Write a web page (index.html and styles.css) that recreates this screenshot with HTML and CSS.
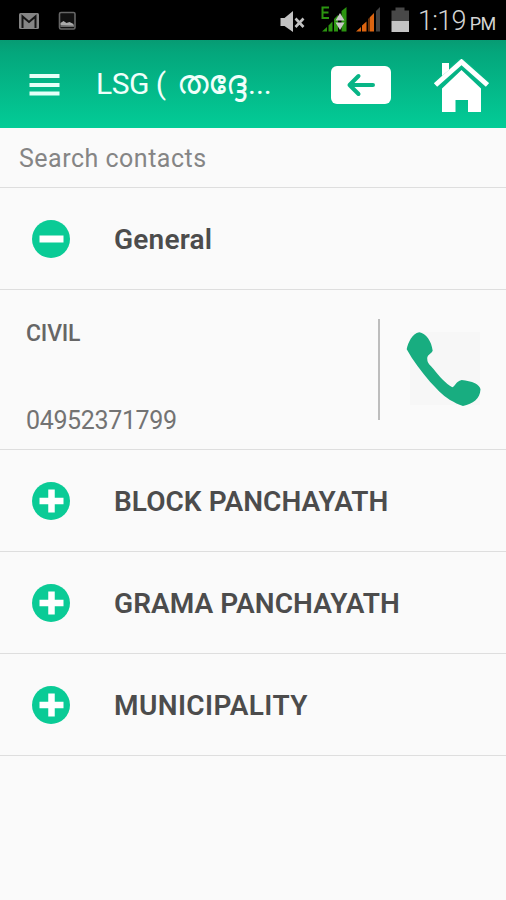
FILE: index.html
```html
<!DOCTYPE html>
<html lang="en">
<head>
<meta charset="utf-8">
<title>LSG contacts</title>
<link rel="stylesheet" href="styles.css">
</head>
<body>
<div class="status">
  <svg class="notices" width="80" height="40" viewBox="0 0 80 40">
    <rect x="19" y="13" width="20" height="16" rx="1.5" fill="#858585"/>
    <path d="M22.500 28V16.500L29 22l6.500-5.500V28" fill="none" stroke="#151515" stroke-width="2"/>
    <rect x="59.500" y="12.500" width="15.500" height="16.500" rx="1.500" fill="#111" stroke="#666" stroke-width="1.600"/>
    <path d="M60.500 25v-2l3-2 3 2 3-1 4 2v2z" fill="#aaa"/>
    <path d="M60.500 26h13.500" stroke="#888" stroke-width="1.500"/>
  </svg>
  <svg class="signals" width="136" height="40" viewBox="276 0 136 40">
    <path d="M280.500 18h4L293 11v21l-8.500-6h-4z" fill="#c2c2c2"/>
    <path d="M295.500 18.500l8 8.500m0-8.500l-8 8.500" stroke="#c2c2c2" stroke-width="2.600"/>
    <path d="M329 7.500h-6.500v10.500h6.500m-6.500-5.500h6" fill="none" stroke="#2b9410" stroke-width="2"/>
    <path d="M322 31.500l5-4.500v4.500zM328.500 31.500v-6l4-4v10zM334 31.500V19l4-4v16.500zM341.500 31.500V11l5-4v24.500z" fill="#2b9410"/>
    <path d="M335.500 20.500l4.500-7.500 4.500 7.500zM335.500 22.500h9l-4.500 7.500z" fill="#c8c8c8"/>
    <path d="M356 31.500l5-4.500v4.500zM362 31.500v-6l4.500-4v10zM368 31.500V19l6-6v18.500z" fill="#db6410"/>
    <path d="M369 15v17" stroke="#000"/>
    <path d="M376 31.500V11l4-4v24.500z" fill="#424242"/>
    <path d="M391.500 10.500h4V7.500h9v3h4.500V21h-17.500z" fill="#484848"/>
    <path d="M391.500 21H409v11h-17.500z" fill="#c4c4c4"/>
  </svg>
  <div class="clock">1:19<span class="meridiem">PM</span></div>
</div>
<header class="bar">
  <svg class="menu" width="32" height="24" viewBox="0 0 32 24"><path d="M.5 3h30M.5 12h30M.5 20.500h30" stroke="#e6fff8" stroke-width="4"/></svg>
  <h1 class="title"><span class="latin">LSG (</span><span class="local">തദ്ദേ</span><span class="dots">...</span></h1>
  <svg class="back" width="60" height="38" viewBox="0 0 60 38"><rect width="60" height="38" rx="6" fill="#fff"/><path d="M42 19H18.500M27.500 10l-9 9 9 9" fill="none" stroke="#08b586" stroke-width="4" stroke-linecap="round" stroke-linejoin="round"/></svg>
  <svg class="home" width="56" height="54" viewBox="0 0 56 54"><path d="M9 29.500L28.500 11 48 29.500V53H35V41H22.500v12H9z" fill="#fff"/><path d="M2.500 26L28.500 3l26 23" fill="none" stroke="#08b586" stroke-width="8"/><path d="M9 4h7v7l-7 6z" fill="#fff"/><path d="M2.500 26L28.500 3l26 23" fill="none" stroke="#fff" stroke-width="5"/></svg>
</header>
<main>
  <div class="search">Search contacts</div>
  <section class="group"><svg class="toggle" width="38" height="38" viewBox="0 0 38 38"><circle cx="19" cy="19" r="19" fill="#0acb96"/><path d="M7.500 19h24" stroke="#fff" stroke-width="7"/></svg><h2 class="general">General</h2></section>
  <article class="contact">
    <div class="details"><h3>CIVIL</h3><p>04952371799</p></div>
    <div class="call"><svg width="76" height="76" viewBox="0 0 76 76"><path d="M4 1h70v73H4z" fill="#f7f7f7"/><path d="M.7 18.300C2 12 6 2.500 13.300 1.300 20 2.500 25.500 10 26.700 19.700 25 23 20.500 24 21.300 28.300c0 4 3 6 6 9.500C33 45 40 53 46.300 56.300c3-1 3-5.500 9.400-7.300 5 .5 9.500 1.500 13.300 3.300 3 1.500 5 3.500 5.500 6C74 68 67 73 57 75c-5-1.500-8-3.500-13-6-8-5-14-12-20-18.300C15 40 7 30 .7 18.300z" fill="#18ad80"/></svg></div>
  </article>
  <section class="group"><svg class="toggle" width="38" height="38" viewBox="0 0 38 38"><circle cx="19" cy="19" r="19" fill="#0acb96"/><path d="M7.500 19h24M19.500 7.500v23" stroke="#fff" stroke-width="6.500"/></svg><h2 class="block">BLOCK PANCHAYATH</h2></section>
  <section class="group"><svg class="toggle" width="38" height="38" viewBox="0 0 38 38"><circle cx="19" cy="19" r="19" fill="#0acb96"/><path d="M7.500 19h24M19.500 7.500v23" stroke="#fff" stroke-width="6.500"/></svg><h2 class="grama">GRAMA PANCHAYATH</h2></section>
  <section class="group"><svg class="toggle" width="38" height="38" viewBox="0 0 38 38"><circle cx="19" cy="19" r="19" fill="#0acb96"/><path d="M7.500 19h24M19.500 7.500v23" stroke="#fff" stroke-width="6.500"/></svg><h2 class="municipality">MUNICIPALITY</h2></section>
</main>
</body>
</html>
```
FILE: styles.css
```css
* { box-sizing: border-box; }
body { margin: 0; width: 506px; height: 900px; overflow: hidden; background: #fafafa; font-family: Roboto, "Noto Sans", sans-serif; }
svg { display: block; flex: none; }
h1, h2, h3, p { margin: 0; white-space: nowrap; }
.status { height: 40px; background: #000; display: flex; }
.signals { margin-left: 196px; }
.clock { margin-left: 6px; line-height: 43px; font-size: 27px; font-weight: 300; letter-spacing: -.7px; color: #d4d4d4; white-space: nowrap; }
.meridiem { font-size: 18px; font-weight: 400; margin-left: 4px; }
.bar { height: 88px; display: flex; align-items: center; background: linear-gradient(#079b73, #04a77c 15%, #03cc97); }
.menu { margin: 1px 0 0 29px; }
.title { width: 176px; margin-left: 35px; display: flex; align-items: center; color: #f0fffb; font-size: 30px; font-weight: 400; line-height: 40px; }
.latin { width: 81px; letter-spacing: -.5px; }
.local { width: 71px; font-size: 33px; transform: translateY(-1px); }
.dots { letter-spacing: 0; }
.back { margin-left: 59px; margin-top: 1px; }
.home { margin-left: 42px; margin-top: 4px; }
.search { height: 60px; padding-left: 19px; border-bottom: 1px solid #dedede; line-height: 62px; font-size: 25px; color: #858585; letter-spacing: .5px; }
.group { height: 102px; display: flex; align-items: center; border-bottom: 1px solid #dedede; }
.toggle { margin-left: 32px; }
.group h2 { margin-left: 44px; padding-top: 1px; font-size: 28px; font-weight: 600; letter-spacing: .05px; color: #4c4c4c; }
.group .general { letter-spacing: .2px; }
.group .municipality { letter-spacing: .4px; }
.contact { height: 160px; display: flex; align-items: center; border-bottom: 1px solid #dedede; color: #666; }
.details { width: 378px; height: 101px; padding-left: 26px; display: flex; flex-direction: column; justify-content: space-between; }
.details h3 { font-size: 23px; line-height: 30px; font-weight: 500; letter-spacing: -.2px; }
.details p { font-size: 25px; line-height: 28px; letter-spacing: -.35px; color: #737373; transform: translateY(15px); }
.call { height: 101px; border-left: 2px solid #bdbdbd; padding: 12px 0 0 26px; }
```
